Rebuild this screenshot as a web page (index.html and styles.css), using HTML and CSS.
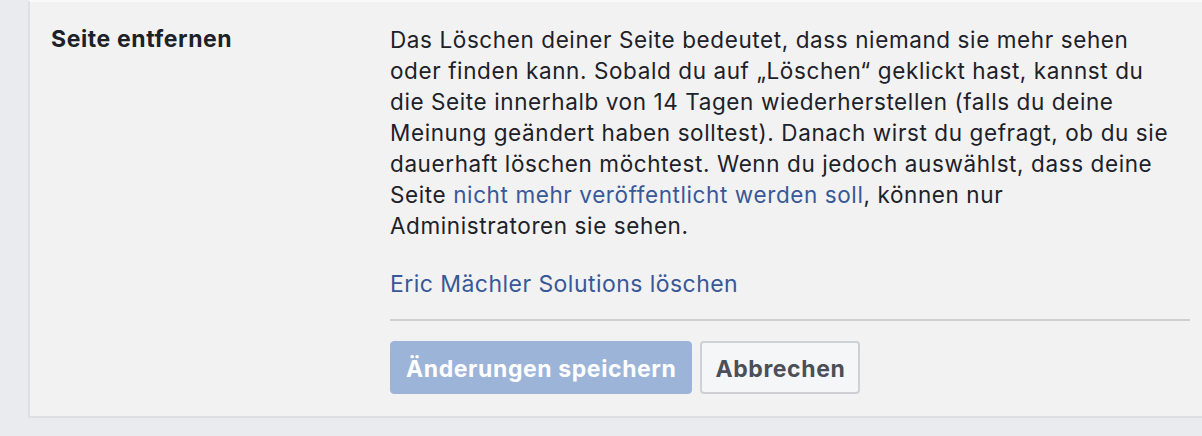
FILE: index.html
```html
<!DOCTYPE html>
<html lang="de">
<head>
<meta charset="utf-8">
<link rel="stylesheet" href="styles.css">
</head>
<body>
<div class="page">
  <section class="panel">
    <div class="row">
      <div class="label">Seite entfernen</div>
      <div class="content">
        <p class="desc">Das Löschen deiner Seite bedeutet, dass niemand sie mehr sehen<br>oder finden kann. Sobald du auf „Löschen“ geklickt hast, kannst du<br>die Seite innerhalb von 14 Tagen wiederherstellen (falls du deine<br>Meinung geändert haben solltest). Danach wirst du gefragt, ob du sie<br>dauerhaft löschen möchtest. Wenn du jedoch auswählst, dass deine<br>Seite <a class="link" href="#">nicht mehr veröffentlicht werden soll</a>, können nur<br>Administratoren sie sehen.</p>
        <a class="link delete" href="#">Eric Mächler Solutions löschen</a>
        <div class="actions">
          <button class="btn primary">Änderungen speichern</button>
          <button class="btn secondary">Abbrechen</button>
        </div>
      </div>
    </div>
  </section>
</div>
</body>
</html>
```
FILE: styles.css
```css
html, body {
  margin: 0;
  padding: 0;
}
body {
  background: #e9ebee;
  font-family: Inter, "Liberation Sans", Arial, sans-serif;
  color: #1d2129;
  width: 1202px;
  height: 436px;
  overflow: hidden;
}
.page {
  padding-left: 28px;
}
.panel {
  background: #f2f2f2;
  border-left: 2px solid #dddfe2;
  border-bottom: 2px solid #dddfe2;
  border-top: 2px solid #f9f9f9;
  height: 418px;
  box-sizing: border-box;
}
.row {
  display: grid;
  grid-template-columns: 339px 1fr;
  padding: 22px 12px 0 21px;
}
.label {
  font-size: 23px;
  font-weight: 700;
  letter-spacing: 0.6px;
  line-height: 31px;
}
.desc {
  margin: 0;
  font-size: 22.5px;
  letter-spacing: 0.6px;
  line-height: 31px;
}
.link {
  color: #385898;
  text-decoration: none;
}
.delete {
  display: block;
  font-size: 23px;
  letter-spacing: 0.45px;
  line-height: 31px;
  margin-top: 28px;
}
.actions {
  margin-top: 19px;
  border-top: 2px solid #cfcfcf;
  padding-top: 20px;
  display: flex;
  gap: 8px;
}
.btn {
  font-family: inherit;
  font-size: 23px;
  font-weight: 700;
  letter-spacing: 0.6px;
  height: 53px;
  border-radius: 4px;
  padding: 2px 15px 0;
  cursor: pointer;
}
.primary {
  background: #9cb4d8;
  color: #fff;
  border: 1px solid #9cb4d8;
}
.secondary {
  background: #f5f6f7;
  color: #4b4f56;
  border: 2px solid #ced0d4;
  padding: 2px 13px 0;
}
```
